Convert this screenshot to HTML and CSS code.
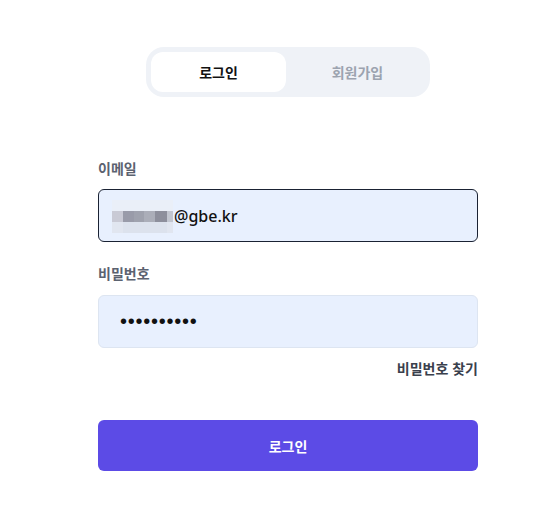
FILE: index.html
```html
<!DOCTYPE html>
<html lang="ko">
<head>
<meta charset="utf-8">
<title>로그인</title>
<link rel="stylesheet" href="styles.css">
</head>
<body>
<div class="page">
  <div class="tabs">
    <div class="tab tab-active">로그인</div>
    <div class="tab">회원가입</div>
  </div>
  <form class="form">
    <label class="label">이메일</label>
    <div class="field field-focus">
      <span class="mosaic">
        <span class="m c1"></span><span class="m c1"></span><span class="m c1"></span><span class="m c1"></span><span class="m c1"></span><span class="m c1"></span>
        <span class="m c2"></span><span class="m c3"></span><span class="m c4"></span><span class="m c5"></span><span class="m c6"></span><span class="m c7"></span>
        <span class="m c8"></span><span class="m c9"></span><span class="m c9"></span><span class="m c9"></span><span class="m c9"></span><span class="m c8"></span>
      </span>
      <span class="value">@gbe.kr</span>
    </div>
    <label class="label label-second">비밀번호</label>
    <div class="field">
      <span class="dots">••••••••••</span>
    </div>
    <div class="find-row"><span class="find">비밀번호 찾기</span></div>
    <button type="button" class="submit">로그인</button>
  </form>
</div>
</body>
</html>
```

FILE: styles.css
```css
* { box-sizing: border-box; }
body {
  margin: 0;
  background: #ffffff;
  font-family: "Noto Sans CJK KR", "Noto Sans", sans-serif;
}
.page {
  display: flex;
  flex-direction: column;
  align-items: center;
  padding: 47px 0 0 20px;
}
.tabs {
  width: 284px;
  height: 50px;
  padding: 5px;
  border-radius: 18px;
  background: #eff2f7;
  display: grid;
  grid-template-columns: 135px 135px;
  column-gap: 4px;
}
.tab {
  display: flex;
  align-items: center;
  justify-content: center;
  font-size: 14px;
  font-weight: 700;
  color: #9ca3af;
  border-radius: 12px;
}
.tab-active {
  background: #ffffff;
  color: #111111;
}
.form {
  width: 380px;
  margin-top: 61px;
  display: flex;
  flex-direction: column;
}
.label {
  font-size: 14px;
  line-height: 20px;
  font-weight: 600;
  color: #5b6270;
  margin-bottom: 11px;
}
.label-second {
  margin-top: 21px;
  margin-bottom: 12px;
}
.field {
  height: 53px;
  border: 1px solid #dde5f1;
  border-radius: 6px;
  background: #e8f0fe;
  display: flex;
  align-items: center;
  padding-left: 13px;
}
.field-focus {
  border-color: #1a2233;
}
.mosaic {
  display: grid;
  grid-template-columns: 11px 11px 10px 11px 12px 6px;
  grid-template-rows: 11px 11px 11px;
  margin-top: 1px;
}
.m { display: block; }
.c1 { background: #eaeff8; }
.c2 { background: #c9cad5; }
.c3 { background: #999ba9; }
.c4 { background: #9fa2ae; }
.c5 { background: #abaeb9; }
.c6 { background: #8d8f9c; }
.c7 { background: #c2c6d0; }
.c8 { background: #e1e6f0; }
.c9 { background: #dce2ed; }
.value {
  font-family: "Noto Sans", "Liberation Sans", sans-serif;
  font-size: 16px;
  font-weight: 500;
  color: #111111;
  margin-left: 1px;
}
.dots {
  font-family: "Liberation Sans", Arial, sans-serif;
  font-size: 20px;
  letter-spacing: 0.75px;
  color: #111111;
  padding-left: 8px;
}
.find-row {
  display: flex;
  justify-content: flex-end;
  margin-top: 10px;
}
.find {
  font-size: 14px;
  line-height: 20px;
  font-weight: 700;
  color: #3a404c;
}
.submit {
  margin-top: 42px;
  height: 51px;
  border: none;
  border-radius: 6px;
  background: #5c4be6;
  color: #ffffff;
  font-family: "Noto Sans CJK KR", "Noto Sans", sans-serif;
  font-size: 14px;
  font-weight: 700;
}
```
